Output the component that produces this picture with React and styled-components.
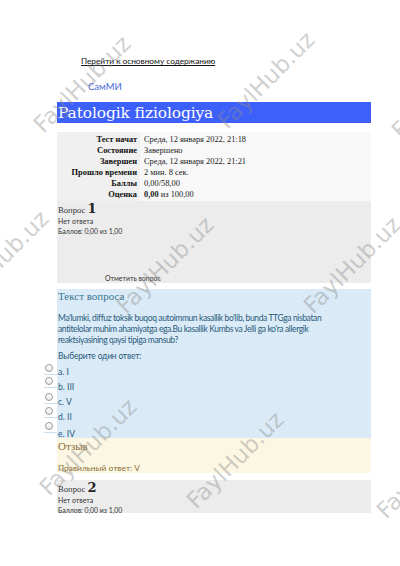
import React from "react";
import styled, { createGlobalStyle } from "styled-components";

const Global = createGlobalStyle`
  html, body { margin: 0; padding: 0; background: #fff; }
  body { font-family: Lato, "Liberation Sans", sans-serif; color: #222; }
`;

const Page = styled.div`
  position: relative;
  width: 400px;
  height: 566px;
  overflow: hidden;
  padding: 55px 29px 0 57px;
  box-sizing: border-box;
`;

const SkipLink = styled.a`
  display: block;
  margin-left: 24px;
  font-size: 8.4px;
  letter-spacing: -0.05px;
  line-height: 12px;
  color: #111;
  text-decoration: underline;
`;

const Brand = styled.div`
  margin: 14px 0 0 31px;
  font-size: 9.5px;
  line-height: 12px;
  color: #4a66d6;
`;

const TitleBar = styled.h1`
  margin: 9px 0 0 0;
  height: 21px;
  background: #3d60fb;
  color: #fff;
  font-family: "DejaVu Serif", serif;
  font-weight: normal;
  font-size: 15.4px;
  line-height: 22px;
  padding-left: 1px;
  letter-spacing: -0.1px;
`;

const Summary = styled.table`
  margin-top: 9px;
  width: 100%;
  border-collapse: collapse;
  font-family: "Liberation Serif", serif;
  font-size: 8.4px;
  background: #f8f8f8;
  td, th { padding: 0; height: 11px; line-height: 11px; white-space: nowrap; }
  tr:first-child td, tr:first-child th { padding-top: 2px; }
  tr:last-child td, tr:last-child th { padding-bottom: 1px; }
`;

const LabelCell = styled.th`
  width: 80px;
  text-align: right;
  font-weight: bold;
  background: #f0f0f0;
  padding-right: 3px !important;
  color: #111;
`;

const ValueCell = styled.td`
  padding-left: 4px !important;
  color: #222;
`;

const InfoBox = styled.div`
  background: #ececec;
  height: ${(p) => p.$h}px;
  padding: 2px 0 0 1px;
  box-sizing: border-box;
  display: flex;
  flex-direction: column;
  margin-top: ${(p) => p.$mt || 0}px;
`;

const QNo = styled.div`
  font-family: "Liberation Serif", serif;
  font-size: 8.6px;
  line-height: 12px;
  color: #333;
  b { font-family: "DejaVu Serif", serif; font-size: 13px; font-weight: bold; color: #222; }
`;

const InfoLine = styled.div`
  font-size: 6.9px;
  line-height: 10px;
  color: #333;
`;

const FlagLink = styled.div`
  margin-top: auto;
  margin-left: 47px;
  font-size: 6.9px;
  line-height: 10px;
  color: #333;
`;

const Content = styled.div`
  margin-top: 6px;
  background: #daebf7;
  height: 149px;
  padding: 0 0 0 1px;
  box-sizing: border-box;
`;

const SectionTitle = styled.div`
  font-family: "Liberation Serif", serif;
  font-size: 11px;
  line-height: 14px;
  color: ${(p) => p.$c};
`;

const QText = styled.p`
  margin: 9.5px 0 0 0;
  font-size: 8.5px;
  letter-spacing: -0.38px;
  line-height: 11px;
  white-space: nowrap;
  color: #2a5a7b;
`;

const Prompt = styled.p`
  margin: 5px 0 0 0;
  font-size: 8.5px;
  letter-spacing: -0.2px;
  line-height: 11px;
  color: #2a5a7b;
`;

const Options = styled.div`
  position: relative;
  margin-top: 3px;
  display: flex;
  flex-direction: column;
`;

const OptionLabel = styled.div`
  height: 15px;
  margin-top: ${(p) => p.$mt || 0}px;
  display: flex;
  align-items: center;
  font-size: 8.6px;
  color: #2a5a7b;
`;

const Radio = styled.span`
  position: absolute;
  left: -14px;
  top: ${(p) => p.$top}px;
  width: 13px;
  height: 11px;
  background: #fff;
  border-bottom: 1px solid #c8e0f0;
  &::before {
    content: "";
    position: absolute;
    left: 1px;
    top: 1px;
    width: 6px;
    height: 6px;
    border-radius: 50%;
    border: 1px solid #9a9a9a;
    background: linear-gradient(#fff, #e8e8e8);
  }
`;

const Feedback = styled.div`
  background: #fcf7e2;
  height: 35px;
  padding: 1px 0 0 1px;
  box-sizing: border-box;
`;

const FbText = styled.div`
  margin-top: 9px;
  font-size: 8.4px;
  line-height: 12px;
  color: #8a6d3b;
`;

const Watermark = styled.span`
  position: absolute;
  left: ${(p) => p.$x}px;
  top: ${(p) => p.$y}px;
  transform: translate(-50%, -50%) rotate(-45deg);
  font-family: "DejaVu Sans", sans-serif;
  font-size: 23px;
  white-space: nowrap;
  color: rgba(140, 140, 140, 0.42);
  pointer-events: none;
`;

const rows = [
  ["Тест начат", "Среда, 12 января 2022, 21:18"],
  ["Состояние", "Завершено"],
  ["Завершен", "Среда, 12 января 2022, 21:21"],
  ["Прошло времени", "2 мин. 8 сек."],
  ["Баллы", "0,00/58,00"],
  ["Оценка", <><b>0,00</b> из 100,00</>],
];

const options = [
  ["a. I", 0, -1.5],
  ["b. III", 0, 11.5],
  ["c. V", 0, 27.5],
  ["d. II", 0, 41.5],
  ["e. IV", 2, 56.5],
];

const marks = [
  [82, 84], [266, 80], [440, 90],
  [0, 259], [165, 265], [352, 265],
  [88, 447], [235, 460], [425, 470],
];

export default function App() {
  return (
    <>
      <Global />
      <Page>
        <SkipLink href="#">Перейти к основному содержанию</SkipLink>
        <Brand>СамМИ</Brand>
        <TitleBar>Patologik fiziologiya</TitleBar>
        <Summary>
          <tbody>
            {rows.map(([l, v]) => (
              <tr key={l}>
                <LabelCell>{l}</LabelCell>
                <ValueCell>{v}</ValueCell>
              </tr>
            ))}
          </tbody>
        </Summary>
        <InfoBox $h={82}>
          <QNo>Вопрос <b>1</b></QNo>
          <InfoLine>Нет ответа</InfoLine>
          <InfoLine>Баллов: 0,00 из 1,00</InfoLine>
          <FlagLink>Отметить вопрос</FlagLink>
        </InfoBox>
        <Content>
          <SectionTitle $c="#3b7394">Текст вопроса</SectionTitle>
          <QText>
            Ma'lumki, diffuz toksik buqoq autoimmun kasallik bo'lib, bunda TTGga nisbatan
            <br />
            antitelolar muhim ahamiyatga ega.Bu kasallik Kumbs va Jelli ga ko'ra allergik
            <br />
            reaktsiyasining qaysi tipiga mansub?
          </QText>
          <Prompt>Выберите один ответ:</Prompt>
          <Options>
            {options.map(([t, mt, top]) => (
              <React.Fragment key={t}>
                <Radio $top={top} />
                <OptionLabel $mt={mt}>{t}</OptionLabel>
              </React.Fragment>
            ))}
          </Options>
        </Content>
        <Feedback>
          <SectionTitle $c="#8a6d3b">Отзыв</SectionTitle>
          <FbText>Правильный ответ: V</FbText>
        </Feedback>
        <InfoBox $h={33} $mt={7}>
          <QNo>Вопрос <b>2</b></QNo>
          <InfoLine>Нет ответа</InfoLine>
          <InfoLine>Баллов: 0,00 из 1,00</InfoLine>
        </InfoBox>
        {marks.map(([x, y], i) => (
          <Watermark key={i} $x={x} $y={y}>FaylHub.uz</Watermark>
        ))}
      </Page>
    </>
  );
}
